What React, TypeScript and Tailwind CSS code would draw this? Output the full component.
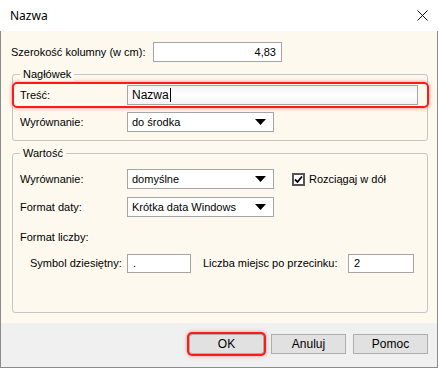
const cream = 'bg-[#fdf9ee]';

const Arrow = () => (
  <svg width="11" height="6" viewBox="0 0 11 6" className="shrink-0">
    <path d="M0 0 H11 L5.5 6 Z" fill="#000" />
  </svg>
);

const Select = ({ value, width }: { value: string; width: string }) => (
  <div className={`${width} h-[20px] bg-white border border-[#a5a5a5] flex items-center justify-between pl-[4px] pr-[7px]`}>
    <span>{value}</span>
    <Arrow />
  </div>
);

const Group = ({ title, children, className }: { title: string; children: React.ReactNode; className: string }) => (
  <div className={`relative ml-[1px] w-[416px] border border-[#c6c6c6] rounded-[3px] ${className}`}>
    <span className={`absolute -top-[8px] left-[7px] px-[3px] leading-[14px] ${cream}`}>{title}</span>
    {children}
  </div>
);

const App = () => {
  return (
    <div
      className="w-[439px] h-[368px] flex flex-col text-[11px] text-black"
      style={{ fontFamily: '"Liberation Sans", Arial, sans-serif' }}
    >
      {/* title bar */}
      <div className="h-[31px] bg-white flex items-center justify-between pl-[10px] pr-[11px] shrink-0">
        <span className="text-[12px]" style={{ fontFamily: '"Noto Sans", sans-serif' }}>Nazwa</span>
        <svg width="11" height="11" viewBox="0 0 11 11">
          <path d="M0.5 0.5 L10.5 10.5 M10.5 0.5 L0.5 10.5" stroke="#111" strokeWidth="1" />
        </svg>
      </div>

      <div className="flex-1 flex flex-col border-x border-b border-[#8c8c8c] w-[438px]">
        <div className={`${cream} h-[292px] pl-[10px] pt-[11px]`}>
          {/* column width */}
          <div className="flex items-center h-[20px]">
            <span className="w-[142px]">Szerokość kolumny (w cm):</span>
            <div className="w-[129px] h-[20px] bg-white border border-[#a5a5a5] flex items-center justify-end pr-[5px]">4,83</div>
          </div>

          <Group title="Nagłówek" className="mt-[12px] pt-[7px] pb-[8px]">
            <div className="-ml-[1px] w-[417px] h-[26px] border-2 border-[#ff1a1a] rounded-[5px] shadow-[0_0_4px_rgba(255,0,0,0.45)] flex items-center pl-[6px] pr-[9px]">
              <span className="w-[107px]">Treść:</span>
              <div className="flex-1 h-[20px] border border-[#a5a5a5] bg-gradient-to-b from-[#f2f2f2] via-white to-[#f4f4f4] flex items-center pl-[4px] text-[12px]">
                Nazwa<span className="w-[1px] h-[14px] bg-black ml-[1px]" />
              </div>
            </div>
            <div className="flex items-center mt-[4px] pl-[7px]">
              <span className="w-[107px]">Wyrównanie:</span>
              <Select value="do środka" width="w-[147px]" />
            </div>
          </Group>

          <Group title="Wartość" className="mt-[12px] pt-[15px] h-[160px]">
            <div className="flex items-center pl-[7px]">
              <span className="w-[107px]">Wyrównanie:</span>
              <Select value="domyślne" width="w-[147px]" />
              <div className="ml-[18px] w-[13px] h-[13px] border-2 border-[#555] bg-white flex items-center justify-center">
                <svg width="9" height="9" viewBox="0 0 9 9">
                  <path d="M1 4.5 L3.5 7 L8 1.5" stroke="#000" strokeWidth="1.8" fill="none" />
                </svg>
              </div>
              <span className="ml-[4px]">Rozciągaj w dół</span>
            </div>
            <div className="flex items-center mt-[8px] pl-[7px]">
              <span className="w-[107px]">Format daty:</span>
              <Select value="Krótka data Windows" width="w-[147px]" />
            </div>
            <div className="flex items-center h-[20px] mt-[10px] pl-[7px]">Format liczby:</div>
            <div className="flex items-center mt-[7px] pl-[17px]">
              <span className="w-[97px]">Symbol dziesiętny:</span>
              <div className="w-[64px] h-[19px] bg-white border border-[#a5a5a5] flex items-center pl-[5px]">.</div>
              <span className="ml-[12px] w-[145px]">Liczba miejsc po przecinku:</span>
              <div className="w-[66px] h-[19px] bg-white border border-[#a5a5a5] flex items-center pl-[5px]">2</div>
            </div>
          </Group>
        </div>

        {/* buttons */}
        <div className="flex-1 bg-[#f0f0f0] flex justify-end items-start pt-[11px] pr-[9px] gap-[7px] text-[12px]">
          <button className="w-[75px] h-[20px] bg-[#e1e1e1] border border-[#adadad] rounded-[3px] shadow-[0_0_0_2px_#ff1a1a,0_0_4px_2px_rgba(255,0,0,0.35)]">OK</button>
          <button className="w-[75px] h-[20px] bg-[#e1e1e1] border border-[#adadad]">Anuluj</button>
          <button className="w-[75px] h-[20px] bg-[#e1e1e1] border border-[#adadad]">Pomoc</button>
        </div>
      </div>
    </div>
  );
};

export default App;
